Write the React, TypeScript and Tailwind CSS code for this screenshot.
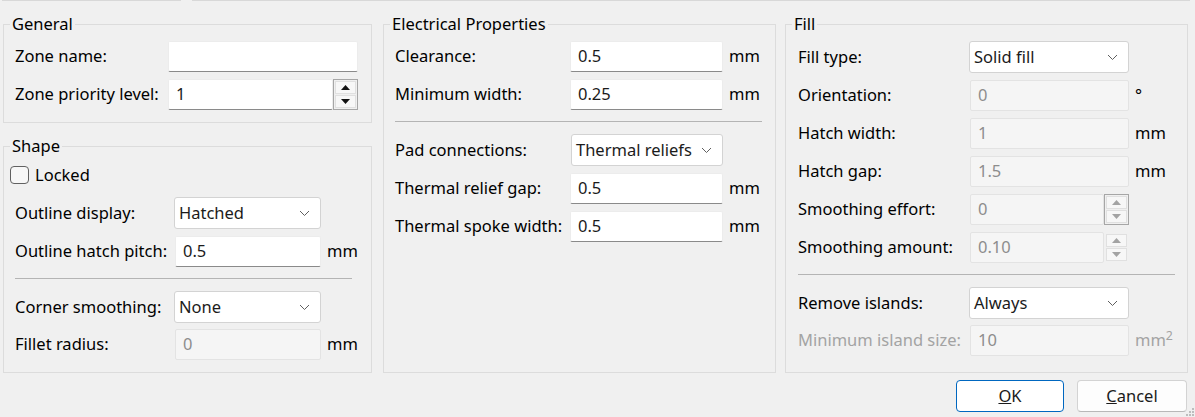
import React from "react";

type Ctl = { value?: string; w: string; disabled?: boolean; className?: string };

const TextInput = ({ value = "", w, disabled, className = "" }: Ctl) => (
  <div
    className={`h-[31px] ${w} ${className} shrink-0 flex items-center px-[7px] rounded-[2px] border ${
      disabled
        ? "bg-[#f5f5f5] border-[#e3e3e3] text-[#8d8d8d]"
        : "bg-white border-[#ececec] border-b-[#8a8a8a] text-[#1b1b1b]"
    }`}
  >
    {value}
  </div>
);

const Chevron = () => (
  <svg width="11" height="7" viewBox="0 0 11 7" className="shrink-0">
    <path d="M1 1 L5.5 5.5 L10 1" fill="none" stroke="#5f5f5f" strokeWidth="1" />
  </svg>
);

const Select = ({ value = "", w, className = "" }: Ctl) => (
  <div
    className={`h-[32px] ${w} ${className} shrink-0 flex items-center justify-between pl-[4px] pr-[10px] bg-white border border-[#d3d3d3] rounded-[3px] text-[#1b1b1b]`}
  >
    <span>{value}</span>
    <Chevron />
  </div>
);

const Tri = ({ up, color }: { up?: boolean; color: string }) => (
  <svg width="9" height="5" viewBox="0 0 9 5">
    <polygon points={up ? "0,5 4.5,0 9,5" : "0,0 9,0 4.5,5"} fill={color} />
  </svg>
);

const SpinButtons = ({ disabled, framed }: { disabled?: boolean; framed?: boolean }) => {
  const c = disabled ? "#a3a3a3" : "#111111";
  return (
    <div
      className={`h-[31px] w-[25px] shrink-0 flex flex-col gap-[1px] p-[1px] border ${
        framed ? "border-[#a6a6a6]" : "border-transparent"
      }`}
    >
      <div className="flex-1 flex items-center justify-center bg-[#f7f7f7] border border-[#e0e0e0]">
        <Tri up color={c} />
      </div>
      <div className="flex-1 flex items-center justify-center bg-[#f7f7f7] border border-[#e0e0e0]">
        <Tri color={c} />
      </div>
    </div>
  );
};

const Group = ({
  title,
  className = "",
  inner = "",
  children,
}: {
  title: string;
  className?: string;
  inner?: string;
  children: React.ReactNode;
}) => (
  <fieldset className={`border border-[#dcdcdc] min-w-0 flex flex-col ${className}`}>
    <legend className="ml-[6px] px-[2px] leading-[20px] text-black">{title}</legend>
    <div className={`flex-1 ${inner}`}>{children}</div>
  </fieldset>
);

const Sep = ({ className = "" }: { className?: string }) => (
  <div className={`h-px bg-[#b4b4b4] ${className}`} />
);

const Unit = ({ children, muted }: { children: React.ReactNode; muted?: boolean }) => (
  <span className={`ml-[6px] whitespace-nowrap ${muted ? "text-[#a3a3a3]" : "text-black"}`}>{children}</span>
);

export default function App() {
  return (
    <div className="relative w-[1195px] h-[417px] overflow-hidden bg-[#f0f0f0] text-[16.5px] text-black font-['Noto_Sans',sans-serif]">
      {/* tab strip edge */}
      <div className="flex h-px">
        <div className="ml-[2px] w-[179px] bg-[#d8d8d8]" />
        <div className="ml-[11px] w-[998px] bg-[#d8d8d8]" />
      </div>

      <div className="flex items-stretch pl-[3px] mt-[13px] gap-[11px]">
        {/* left column */}
        <div className="w-[369px] flex flex-col">
          <Group title="General" inner="pl-[11px] pr-[12px] pt-[7px] pb-[12px]">
            <div className="flex items-center">
              <span className="w-[153px] shrink-0">Zone name:</span>
              <TextInput w="w-[190px]" />
            </div>
            <div className="flex items-center mt-[7px]">
              <span className="w-[153px] shrink-0">Zone priority level:</span>
              <TextInput w="w-[165px]" value="1" />
              <SpinButtons framed />
            </div>
          </Group>

          <Group title="Shape" className="flex-1 mt-[13px]" inner="pl-[6px] pr-[6px] pb-[12px]">
            <div className="flex items-center h-[18px] mt-[10px]">
              <div className="w-[19px] h-[18px] rounded-[4px] border border-[#616161] bg-[#f7f7f7]" />
              <span className="ml-[6px]">Locked</span>
            </div>
            <div className="pl-[5px]">
              <div className="flex items-center mt-[13px]">
                <span className="w-[159px] shrink-0">Outline display:</span>
                <Select w="w-[147px]" value="Hatched" />
              </div>
              <div className="flex items-center mt-[7px]">
                <span className="w-[160px] shrink-0">Outline hatch pitch:</span>
                <TextInput w="w-[146px]" value="0.5" />
                <Unit>mm</Unit>
              </div>
              <Sep className="mt-[11px] mr-[13px]" />
              <div className="flex items-center mt-[12px]">
                <span className="w-[159px] shrink-0">Corner smoothing:</span>
                <Select w="w-[147px]" value="None" />
              </div>
              <div className="flex items-center mt-[6px]">
                <span className="w-[160px] shrink-0">Fillet radius:</span>
                <TextInput w="w-[146px]" value="0" disabled />
                <Unit>mm</Unit>
              </div>
            </div>
          </Group>
        </div>

        {/* middle column */}
        <Group title="Electrical Properties" className="w-[393px]" inner="pl-[11px] pr-[13px] pt-[7px]">
          <div className="flex items-center">
            <span className="w-[175px] shrink-0">Clearance:</span>
            <TextInput w="w-[153px]" value="0.5" />
            <Unit>mm</Unit>
          </div>
          <div className="flex items-center mt-[7px]">
            <span className="w-[175px] shrink-0">Minimum width:</span>
            <TextInput w="w-[153px]" value="0.25" />
            <Unit>mm</Unit>
          </div>
          <Sep className="mt-[11px]" />
          <div className="flex items-center mt-[12px]">
            <span className="w-[176px] shrink-0">Pad connections:</span>
            <Select w="w-[152px]" value="Thermal reliefs" />
          </div>
          <div className="flex items-center mt-[7px]">
            <span className="w-[175px] shrink-0">Thermal relief gap:</span>
            <TextInput w="w-[153px]" value="0.5" />
            <Unit>mm</Unit>
          </div>
          <div className="flex items-center mt-[7px]">
            <span className="w-[175px] shrink-0">Thermal spoke width:</span>
            <TextInput w="w-[153px]" value="0.5" />
            <Unit>mm</Unit>
          </div>
        </Group>

        {/* right column */}
        <Group title="Fill" className="w-[403px] ml-[-2px]" inner="pl-[12px] pr-[12px] pt-[7px] pb-[12px]">
          <div className="flex items-center">
            <span className="w-[171px] shrink-0">Fill type:</span>
            <Select w="w-[160px]" value="Solid fill" className="h-[31px]" />
          </div>
          <div className="flex items-center mt-[7px]">
            <span className="w-[172px] shrink-0">Orientation:</span>
            <TextInput w="w-[159px]" value="0" disabled />
            <Unit>°</Unit>
          </div>
          <div className="flex items-center mt-[7px]">
            <span className="w-[172px] shrink-0">Hatch width:</span>
            <TextInput w="w-[159px]" value="1" disabled />
            <Unit>mm</Unit>
          </div>
          <div className="flex items-center mt-[7px]">
            <span className="w-[172px] shrink-0">Hatch gap:</span>
            <TextInput w="w-[159px]" value="1.5" disabled />
            <Unit>mm</Unit>
          </div>
          <div className="flex items-center mt-[7px]">
            <span className="w-[172px] shrink-0">Smoothing effort:</span>
            <TextInput w="w-[134px]" value="0" disabled />
            <SpinButtons disabled framed />
          </div>
          <div className="flex items-center mt-[7px]">
            <span className="w-[172px] shrink-0">Smoothing amount:</span>
            <TextInput w="w-[134px]" value="0.10" disabled />
            <SpinButtons disabled />
          </div>
          <Sep className="mt-[11px]" />
          <div className="flex items-center mt-[12px]">
            <span className="w-[171px] shrink-0">Remove islands:</span>
            <Select w="w-[160px]" value="Always" />
          </div>
          <div className="flex items-center mt-[6px]">
            <span className="w-[172px] shrink-0 text-[#a3a3a3]">Minimum island size:</span>
            <TextInput w="w-[159px]" value="10" disabled />
            <Unit muted>
              mm<sup>2</sup>
            </Unit>
          </div>
        </Group>
      </div>

      {/* dialog buttons */}
      <div className="flex justify-end gap-[13px] pr-[8px] mt-[7px]">
        <button className="w-[108px] h-[32px] bg-white border border-[#0067c0] rounded-[4px] text-[#1b1b1b]">
          <span className="underline">O</span>K
        </button>
        <button className="w-[110px] h-[32px] bg-[#fdfdfd] border border-[#d3d3d3] border-b-[#b8b8b8] rounded-[4px] text-[#1b1b1b]">
          <span className="underline">C</span>ancel
        </button>
      </div>

      {/* size grip */}
      <svg width="9" height="9" viewBox="0 0 9 9" className="absolute right-0 bottom-0">
        <rect x="6" y="0" width="2" height="2" fill="#bdbdbd" />
        <rect x="3" y="3" width="2" height="2" fill="#bdbdbd" />
        <rect x="6" y="3" width="2" height="2" fill="#bdbdbd" />
        <rect x="0" y="6" width="2" height="2" fill="#bdbdbd" />
        <rect x="3" y="6" width="2" height="2" fill="#bdbdbd" />
        <rect x="6" y="6" width="2" height="2" fill="#bdbdbd" />
      </svg>
    </div>
  );
}
